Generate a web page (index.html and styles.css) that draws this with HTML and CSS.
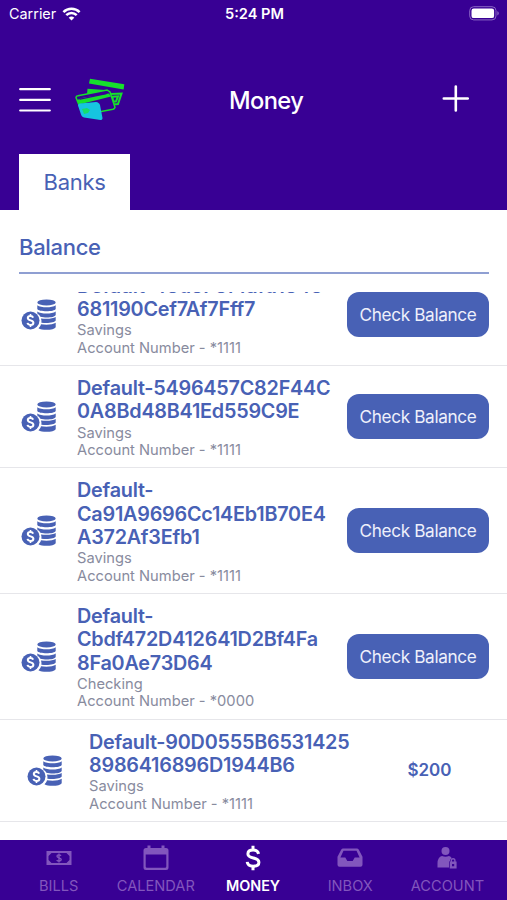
FILE: index.html
```html
<!DOCTYPE html>
<html lang="en">
<head>
    <meta charset="UTF-8">
    <meta name="viewport" content="width=device-width, initial-scale=1.0">
    <title>Money</title>
    <link rel="stylesheet" href="styles.css">
</head>
<body>
    <!-- shared coin icon -->
    <svg class="sprite" width="0" height="0">
        <symbol id="coins" viewBox="0 0 36 31">
            <g fill="currentColor">
                <ellipse cx="25.5" cy="3.4" rx="9.2" ry="3"/>
                <path d="M16.3 6.2c3.6 2.8 14.8 2.8 18.4 0v3.7c-1 3-17.4 3-18.4 0z"/>
                <path d="M16.3 12.4c3.6 2.8 14.8 2.8 18.4 0v3.7c-.8 2.6-10.5 3.2-15.3 1.7-.8-1.5-1.7-2.3-3.1-3.2z"/>
                <path d="M20 19.4c5 .9 12 .5 14.7-1.3v3.5c-.8 2.2-8.5 3-14.3 2.1.2-1.4.1-2.9-.4-4.3z"/>
                <path d="M20 25.2c5 .9 12 .5 14.7-1.5v4.2c-1 3.3-13.5 3.7-17.2 1.3 1.2-1.2 2-2.4 2.5-4z"/>
                <circle cx="9.5" cy="21.5" r="9"/>
            </g>
            <g fill="none" stroke="#fff">
                <path stroke-width="2" d="M12.2 18.7c-.5-1.2-1.6-1.7-2.8-1.7-1.5 0-2.6.8-2.6 2.1 0 3 5.6 1.6 5.6 4.6 0 1.4-1.3 2.2-2.9 2.2-1.6 0-2.7-.7-3-2"/>
                <path stroke-width="1.6" d="M9.5 15v2.5M9.5 25.5V28"/>
            </g>
        </symbol>
    </svg>

    <div class="app">
        <header class="header">
            <div class="status">
                <div class="carrier">
                    <span>Carrier</span>
                    <svg width="19" height="14" viewBox="0 0 18 14" fill="none" stroke="#fff" stroke-width="2.5">
                        <path d="M.9 5.2c4.5-4.5 11.7-4.5 16.2 0"/>
                        <path d="M3.8 8.2c2.9-2.9 7.5-2.9 10.4 0"/>
                        <path d="M9 13.5 6.2 10.7c1.5-1.5 4.1-1.5 5.6 0z" fill="#fff" stroke="none"/>
                    </svg>
                </div>
                <span class="time">5:24 PM</span>
                <svg class="battery" width="31" height="15" viewBox="0 0 31 15">
                    <rect x=".7" y=".7" width="26.3" height="13.2" rx="4" fill="none" stroke="#8a66c4"/>
                    <rect x="2.5" y="2.5" width="22.6" height="9.6" rx="2.2" fill="#fff"/>
                    <path d="M28.3 5.3c2 .7 2 3.5 0 4.2z" fill="#8a66c4"/>
                </svg>
            </div>
            <div class="nav">
                <svg class="menu" width="32" height="26" viewBox="0 0 32 26" stroke="#fff" stroke-width="2.2" stroke-linecap="round">
                    <path d="M1.2 2.2h29.6M1.2 12.9h29.6M1.2 23.5h29.6"/>
                </svg>
                <svg class="logo" width="50" height="44" viewBox="0 0 50 44">
                    <path d="M15 .8 49.3 6.3 48.6 11.5 14 5.5z" fill="#16e02c"/>
                    <path d="M12.5 10.8 33 12.3 31 13 12 16.5z" fill="#16e02c"/>
                    <path d="M33 14.5 36 16l10.5-.5-3.5 10.5-5 .5M37.5 18.8l5.5-.5-2 5-3 .5z" fill="none" stroke="#16e02c" stroke-width="2"/>
                    <path d="M1 19.5c0-1 .7-1.6 2-1.8L32 12l3 2 5 15.5c-.4 1-1 1.5-2 1.8L8 37z" fill="#380094" stroke="#16e02c" stroke-width="1.5"/>
                    <path d="M2 22 8 19.7 34 15.5 36 18.5 4 26.5z" fill="#16e02c"/>
                    <path d="M4 20.7 32.5 14.5 31.5 16.3 5 21.7z" fill="#380094"/>
                    <path d="M3 27.5c0-1 .8-1.8 2-2l16-1.5c2 .3 3.3 1.3 4 3L27.5 40c0 1.5-.8 2-2 2L9 39.5c-1.5-.5-2.5-1.3-3-3z" fill="#16c4e0"/>
                    <path d="M7 31l5-1 3 2-2 3-4 1z" fill="#16dd6c"/>
                </svg>
                <h1 class="title">Money</h1>
                <svg class="add" width="27" height="27" viewBox="0 0 27 27" stroke="#fff" stroke-width="2.6" stroke-linecap="round">
                    <path d="M13.8 1.5v24M1.8 13.5h24"/>
                </svg>
            </div>
            <div class="tab">Banks</div>
        </header>

        <main class="content">
            <h2 class="section-title">Balance</h2>
            <div class="list">
                <div class="row first">
                    <svg class="coins"><use href="#coins"/></svg>
                    <div class="info">
                        <div class="name">Default-48d8F8f4afd1848<br>681190Cef7Af7Fff7</div>
                        <div class="meta">Savings<br>Account Number - *1111</div>
                    </div>
                    <button class="check">Check Balance</button>
                </div>
                <div class="row">
                    <svg class="coins"><use href="#coins"/></svg>
                    <div class="info">
                        <div class="name">Default-5496457C82F44C<br>0A8Bd48B41Ed559C9E</div>
                        <div class="meta">Savings<br>Account Number - *1111</div>
                    </div>
                    <button class="check">Check Balance</button>
                </div>
                <div class="row">
                    <svg class="coins"><use href="#coins"/></svg>
                    <div class="info">
                        <div class="name">Default-<br>Ca91A9696Cc14Eb1B70E4<br>A372Af3Efb1</div>
                        <div class="meta">Savings<br>Account Number - *1111</div>
                    </div>
                    <button class="check">Check Balance</button>
                </div>
                <div class="row">
                    <svg class="coins"><use href="#coins"/></svg>
                    <div class="info">
                        <div class="name">Default-<br>Cbdf472D412641D2Bf4Fa<br>8Fa0Ae73D64</div>
                        <div class="meta">Checking<br>Account Number - *0000</div>
                    </div>
                    <button class="check">Check Balance</button>
                </div>
                <div class="row known">
                    <svg class="coins"><use href="#coins"/></svg>
                    <div class="info">
                        <div class="name">Default-90D0555B6531425<br>8986416896D1944B6</div>
                        <div class="meta">Savings<br>Account Number - *1111</div>
                    </div>
                    <div class="amount">$200</div>
                </div>
            </div>
        </main>

        <nav class="tabbar">
            <div class="item">
                <svg width="26" height="26" viewBox="0 0 26 26">
                    <path fill="currentColor" fill-rule="evenodd" d="M.5 6h25v14H.5zM5.5 8 2.5 11v4l3 3h15l3-3v-4l-3-3z"/>
                    <path d="M15 10.8c-1-1.3-4-1.2-4 .5 0 2 4.2 1.2 4.2 3.3 0 1.9-3.4 2-4.5.5M13 8.5v9" fill="none" stroke="currentColor" stroke-width="1.4"/>
                </svg>
                <span>BILLS</span>
            </div>
            <div class="item">
                <svg width="26" height="26" viewBox="0 0 26 26">
                    <path fill="currentColor" fill-rule="evenodd" d="M4.5.5h3V3h11V.5h3V3h1.5q2.5 0 2.5 2.5v17q0 2.5-2.5 2.5H3q-2.5 0-2.5-2.5v-17Q.5 3 3 3h1.5zM2.7 9.5v12q0 1.3 1.3 1.3h18q1.3 0 1.3-1.3v-12z"/>
                </svg>
                <span>CALENDAR</span>
            </div>
            <div class="item active">
                <svg width="26" height="26" viewBox="0 0 26 26" fill="none" stroke="currentColor" stroke-width="3">
                    <path d="M18.6 8.8C18 6.3 16 5 13.1 5 9.8 5 7.9 6.6 7.9 8.9c0 5.6 11 2.5 11 8.3 0 2.5-2.3 4-5.7 4-3.4 0-5.7-1.6-6-4.3M13 .7v4.5M13 21v4.3"/>
                </svg>
                <span>MONEY</span>
            </div>
            <div class="item">
                <svg width="26" height="26" viewBox="0 0 26 26">
                    <path fill="currentColor" fill-rule="evenodd" d="M6 3.5h14q1 0 1.7 1l3.8 7.3v8q0 2-2 2h-21q-2 0-2-2v-8l3.8-7.3q.7-1 1.7-1zM6.5 5.7 3.4 12.5H8.3l2 3.5h5.4l2-3.5h4.9L19.5 5.7z"/>
                </svg>
                <span>INBOX</span>
            </div>
            <div class="item">
                <svg width="26" height="26" viewBox="0 0 26 26">
                    <g fill="currentColor">
                        <circle cx="11.5" cy="6" r="4"/>
                        <path d="M3.5 22.5v-4q0-6.5 4.5-7.5 3.5 1.6 7 0 1.8.5 2.8 2.3-2 1-2 3.2h-.8v6z"/>
                        <path fill-rule="evenodd" d="M15.7 16.5h.9v-1q0-2.5 2.5-2.5t2.5 2.5v1h1v7h-6.9zM18 16.5h2.2v-1q0-1-1.1-1t-1.1 1zM18 19v2.2h2.2V19z"/>
                    </g>
                </svg>
                <span>ACCOUNT</span>
            </div>
        </nav>
    </div>
</body>
</html>
```
FILE: styles.css
```css
:root {
    --purple: #380094;
    --blue: #4861b5;
}
html, body {
    margin: 0;
    padding: 0;
    height: 100%;
    font-family: Inter, "Liberation Sans", sans-serif;
    background: #fff;
}
.sprite {
    position: absolute;
}
.app {
    display: flex;
    flex-direction: column;
    height: 900px;
    overflow: hidden;
}
.header {
    display: flex;
    flex-direction: column;
    height: 209.5px;
    background: var(--purple);
    color: #fff;
}
.status {
    display: grid;
    grid-template-columns: 1fr auto 1fr;
    align-items: center;
    height: 27px;
    padding: 0 7px 0 9px;
    font-size: 14.4px;
}
.carrier {
    display: flex;
    align-items: center;
    gap: 6px;
}
.time {
    font-weight: 600;
    font-size: 14.6px;
}
.battery {
    justify-self: end;
}
.nav {
    display: grid;
    grid-template-columns: 32px 50px 1fr 27px;
    align-items: center;
    height: 72px;
    margin-top: 27px;
    padding: 10px 38px 0 19px;
    column-gap: 24px;
}
.logo {
    margin-top: -1px;
}
.title {
    margin: 2px 0 0 80px;
    font-size: 23.7px;
    font-weight: 500;
    line-height: 32px;
    letter-spacing: -.6px;
}
.add {
    margin-top: -4px;
}
.tab {
    width: 111px;
    height: 56px;
    margin: auto 0 0 19px;
    background: #fff;
    color: var(--blue);
    font-size: 22px;
    line-height: 56px;
    letter-spacing: -.3px;
    text-align: center;
}
.content {
    flex: 1;
    display: flex;
    flex-direction: column;
    min-height: 0;
}
.section-title {
    margin: 0 18px 0 19px;
    height: 62.5px;
    border-bottom: 2px solid #8f9fd2;
    color: var(--blue);
    font-size: 22px;
    font-weight: 500;
    line-height: 75px;
    letter-spacing: -.3px;
}
.list {
    margin-top: 17.8px;
    flex: 1;
    overflow: hidden;
}
.row {
    display: flex;
    align-items: center;
    padding: 0 18px 0 21px;
    border-bottom: 1px solid #e6e6ea;
}
.first {
    margin-top: -28px;
}
.coins {
    flex: none;
    width: 36px;
    height: 31px;
    margin-right: 20px;
    color: var(--blue);
}
.info {
    flex: 1;
    padding: 11px 0 7.9px;
}
.name {
    color: var(--blue);
    font-size: 19.8px;
    font-weight: 600;
    line-height: 23.3px;
    letter-spacing: -.22px;
    white-space: nowrap;
}
.meta {
    margin-top: 1px;
    color: #888b9e;
    font-size: 14.7px;
    line-height: 17.4px;
}
.check {
    flex: none;
    width: 142px;
    height: 45.5px;
    padding: 0;
    border: none;
    border-radius: 12px;
    background: var(--blue);
    color: #eef0fb;
    font-family: inherit;
    font-size: 17.2px;
    letter-spacing: -.35px;
}
.known {
    padding-left: 27px;
}
.known .coins {
    margin-right: 26px;
}
.amount {
    width: 119px;
    color: var(--blue);
    font-size: 17px;
    font-weight: 600;
    text-align: center;
}
.tabbar {
    display: flex;
    height: 60px;
    padding: 0 11px 0 10px;
    background: var(--purple);
}
.item {
    flex: 1;
    display: flex;
    flex-direction: column;
    align-items: center;
    padding-top: 5px;
    color: #8256bd;
    font-size: 14.6px;
}
.item span {
    margin-top: 6px;
}
.active {
    color: #fff;
    font-size: 14.4px;
    font-weight: 600;
}
```
